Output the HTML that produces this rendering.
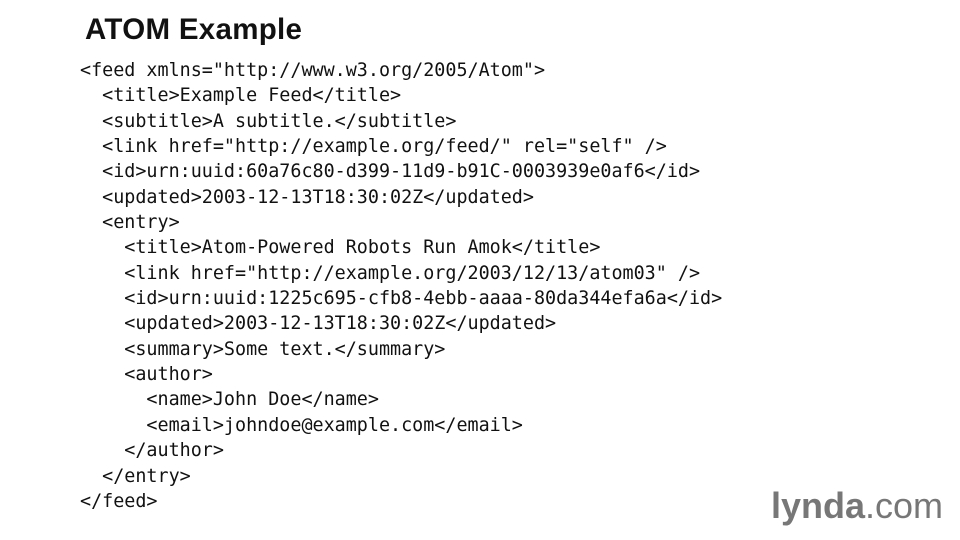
<!DOCTYPE html>
<html><head><meta charset="utf-8"><style>
body{margin:0;width:960px;height:540px;background:#fff;position:relative;overflow:hidden}
h1{position:absolute;left:85px;top:13px;margin:0;font:bold 29.5px "Liberation Sans",sans-serif;color:#111;letter-spacing:0.3px}
pre{position:absolute;left:80px;top:58px;margin:0;font:18.4px/25.35px "DejaVu Sans Mono",monospace;color:#111}
.logo{position:absolute;left:771px;top:485px;font:36px "Liberation Sans",sans-serif;color:#777;letter-spacing:0}
.logo b{font-weight:bold}
</style></head><body>
<h1>ATOM Example</h1>
<pre>&lt;feed xmlns="http://www.w3.org/2005/Atom"&gt;
  &lt;title&gt;Example Feed&lt;/title&gt;
  &lt;subtitle&gt;A subtitle.&lt;/subtitle&gt;
  &lt;link href="http://example.org/feed/" rel="self" /&gt;
  &lt;id&gt;urn:uuid:60a76c80-d399-11d9-b91C-0003939e0af6&lt;/id&gt;
  &lt;updated&gt;2003-12-13T18:30:02Z&lt;/updated&gt;
  &lt;entry&gt;
    &lt;title&gt;Atom-Powered Robots Run Amok&lt;/title&gt;
    &lt;link href="http://example.org/2003/12/13/atom03" /&gt;
    &lt;id&gt;urn:uuid:1225c695-cfb8-4ebb-aaaa-80da344efa6a&lt;/id&gt;
    &lt;updated&gt;2003-12-13T18:30:02Z&lt;/updated&gt;
    &lt;summary&gt;Some text.&lt;/summary&gt;
    &lt;author&gt;
      &lt;name&gt;John Doe&lt;/name&gt;
      &lt;email&gt;johndoe@example.com&lt;/email&gt;
    &lt;/author&gt;
  &lt;/entry&gt;
&lt;/feed&gt;</pre>
<div class="logo"><b>lynda</b>.com</div>
</body></html>
